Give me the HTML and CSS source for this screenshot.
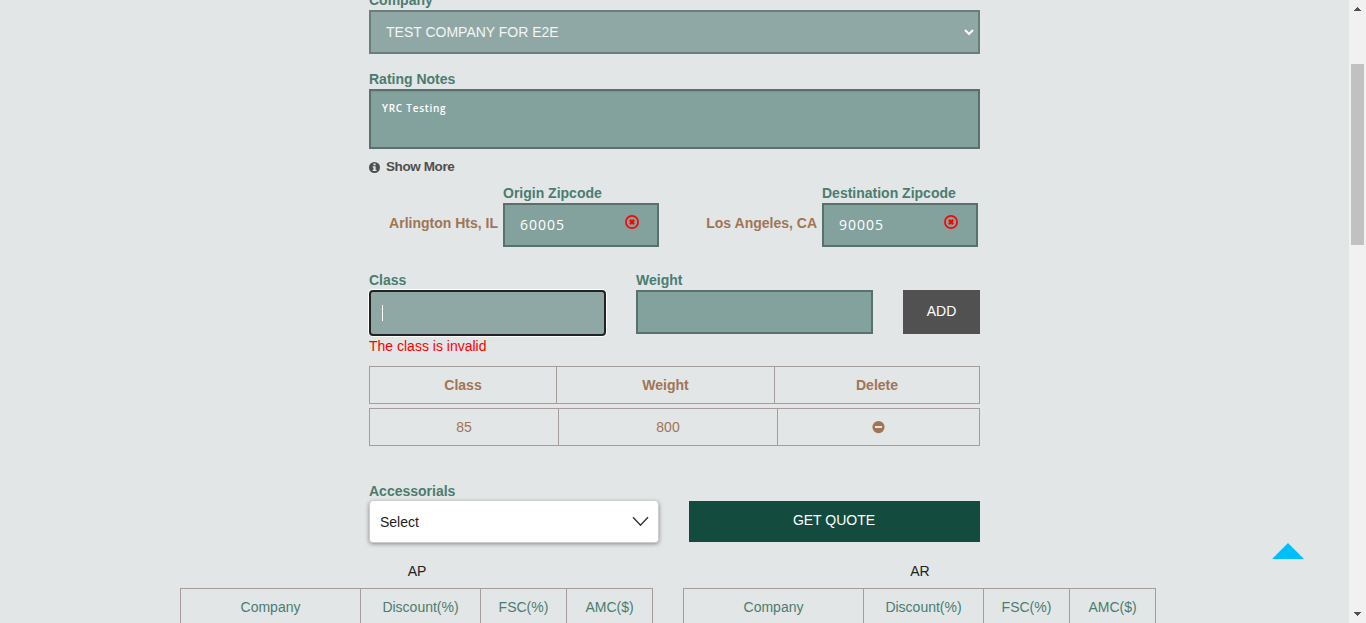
FILE: index.html
```html
<!DOCTYPE html>
<html lang="en">
<head>
<meta charset="utf-8">
<title>Rating</title>
<link rel="stylesheet" href="styles.css">
</head>
<body>
<main class="page">
  <section class="form">
    <label class="label">Company</label>
    <div class="field company"><span>TEST COMPANY FOR E2E</span>
      <svg width="10" height="7" viewBox="0 0 10 7"><path d="M1 1l4 4 4-4" fill="none" stroke="#fff" stroke-width="2"/></svg>
    </div>
    <label class="label notes-label">Rating Notes</label>
    <div class="field notes">YRC Testing</div>
    <div class="show-more">
      <svg width="12" height="12" viewBox="0 0 12 12"><circle cx="5.5" cy="6.5" r="5.5" fill="#4f4f4f"/><path d="M4.5 2.5h2.1v1.7H4.5zM3.7 5.2h2.9v3.5h.9V10H3.7V8.7h.8V6.5h-.8z" fill="#e2e6e6"/></svg>
      <span>Show More</span>
    </div>
    <div class="zips">
      <div class="zip">
        <span class="city">Arlington Hts, IL</span>
        <div class="zip-box"><label class="label">Origin Zipcode</label>
          <div class="field zip-field"><span>60005</span><svg class="clear" width="14" height="14" viewBox="0 0 14 14"><circle cx="7" cy="7" r="6.1" fill="none" stroke="#f00" stroke-width="1.7"/><path d="M4.9 4.9l4.2 4.2M9.1 4.9L4.9 9.1" stroke="#f00" stroke-width="2.3"/></svg></div></div>
      </div>
      <div class="zip">
        <span class="city">Los Angeles, CA</span>
        <div class="zip-box"><label class="label">Destination Zipcode</label>
          <div class="field zip-field"><span>90005</span><svg class="clear" width="14" height="14" viewBox="0 0 14 14"><circle cx="7" cy="7" r="6.1" fill="none" stroke="#f00" stroke-width="1.7"/><path d="M4.9 4.9l4.2 4.2M9.1 4.9L4.9 9.1" stroke="#f00" stroke-width="2.3"/></svg></div></div>
      </div>
    </div>
    <div class="items">
      <div class="item"><label class="label">Class</label>
        <div class="field focused"><i class="caret"></i></div>
        <div class="error">The class is invalid</div></div>
      <div class="item"><label class="label">Weight</label><div class="field"></div></div>
      <div class="add">ADD</div>
    </div>
    <div class="grid grid-head"><div>Class</div><div>Weight</div><div>Delete</div></div>
    <div class="grid grid-row"><div>85</div><div>800</div><div><svg width="13" height="13" viewBox="0 0 13 13"><circle cx="6.5" cy="6.1" r="6.1" fill="#a17456"/><path d="M3 5h7v2H3z" fill="#e2e6e6"/></svg></div></div>
    <div class="actions">
      <div class="accessorials"><label class="label">Accessorials</label>
        <div class="select"><span>Select</span><svg width="17" height="11" viewBox="0 0 17 11"><path d="M1 1.3l7.5 8 7.5-8" fill="none" stroke="#333" stroke-width="1.4"/></svg></div></div>
      <div class="quote">GET QUOTE</div>
    </div>
  </section>
  <section class="results">
    <div class="result"><div class="caption">AP</div>
      <div class="cols"><div>Company</div><div>Discount(%)</div><div>FSC(%)</div><div>AMC($)</div></div></div>
    <div class="result"><div class="caption">AR</div>
      <div class="cols"><div>Company</div><div>Discount(%)</div><div>FSC(%)</div><div>AMC($)</div></div></div>
  </section>
</main>
<aside class="scrollbar">
  <svg width="7" height="4" viewBox="0 0 7 4" shape-rendering="crispEdges"><path d="M3 0h1v1h1v1h1v1h1v1H0V3h1V2h1V1h1z" fill="#505050"/></svg>
  <div class="thumb"></div>
  <svg class="down" width="7" height="4" viewBox="0 0 7 4" shape-rendering="crispEdges"><path d="M0 0h7v1H6v1H5v1H4v1H3V3H2V2H1V1H0z" fill="#505050"/></svg>
</aside>
<svg class="to-top" width="32" height="16" viewBox="0 0 32 16"><path d="M16 0l16 16H0z" fill="#00bfff"/></svg>
</body>
</html>
```
FILE: styles.css
```css
* { box-sizing: border-box; }
body {
  margin: 0;
  height: 623px;
  display: flex;
  overflow: hidden;
  background: #e2e6e6;
  font: 14px/20px "Liberation Sans", Arial, sans-serif;
}
svg { display: block; flex: none; }
.page { width: 1349px; height: 623px; overflow: hidden; }
.form { width: 611px; margin: -10px 0 0 369px; }
.label { display: block; font-weight: bold; color: #4b7c70; white-space: nowrap; }
.field {
  display: flex;
  align-items: center;
  height: 44px;
  border: 2px solid #5a706c;
  background: #84a29d;
  color: #fff;
}
.company { justify-content: space-between; padding: 0 4px 0 15px; border-color: #6a7e7a; background: #8fa8a5; color: #f3f6f5; }
.notes-label { margin-top: 15px; }
.notes {
  height: 60px;
  align-items: flex-start;
  padding: 7px 11px;
  font-family: "Open Sans", sans-serif;
  font-size: 10px;
  font-weight: 600;
  letter-spacing: .75px;
  box-shadow: inset 0 1px 1px rgba(0, 0, 0, .08);
}
.show-more { display: flex; align-items: center; gap: 5px; margin-top: 8px; font-size: 13.5px; font-weight: bold; letter-spacing: -.4px; color: #4f4f4f; }
.zips { display: flex; justify-content: space-between; margin-top: 6px; padding-right: 2px; }
.zip { display: flex; justify-content: flex-end; gap: 5px; width: 290px; }
.city { padding-top: 30px; font-weight: bold; color: #a17456; }
.zip-box { width: 156px; }
.zip-field { justify-content: space-between; padding: 0 18px 0 15px; font-family: "Open Sans", sans-serif; letter-spacing: 1px; }
.clear { margin-bottom: 7px; }
.items { display: flex; gap: 30px; margin-top: 23px; height: 86px; }
.item { width: 237px; }
.focused { height: 46px; padding-left: 11px; border-color: #202424; border-radius: 4px; background: #8fa8a5; box-shadow: 0 0 0 1px #fff; }
.caret { width: 1px; height: 16px; background: #fff; }
.error { color: #f00; }
.add { flex: 1; height: 44px; margin-top: 20px; background: #515151; color: #fff; text-align: center; line-height: 43px; }
.grid { display: grid; height: 38px; border: 1px solid #a89c9a; color: #a17456; line-height: 36px; text-align: center; }
.grid > div { display: flex; justify-content: center; align-items: center; }
.grid > div + div { border-left: 1px solid #a89c9a; }
.grid-head { grid-template-columns: 186px 218px 1fr; margin-top: 10px; font-weight: bold; }
.grid-row { grid-template-columns: 188px 219px 1fr; margin-top: 4px; }
.actions { display: flex; gap: 30px; margin-top: 35px; }
.accessorials { width: 290px; }
.select { display: flex; align-items: center; justify-content: space-between; height: 42px; padding: 0 9px 0 10px; border: 1px solid #ccc; border-width: 0 1px 1px; border-radius: 4px; background: #fff; color: #222; box-shadow: 0 1px 4px rgba(0, 0, 0, .4); }
.quote { flex: 1; height: 41px; margin-top: 20px; padding-right: 1px; background: #134b3e; color: #fff; text-align: center; line-height: 39px; }
.results { display: flex; gap: 30px; margin: 18px 0 0 180px; }
.result { width: 473px; }
.caption { height: 27px; padding-left: 1px; text-align: center; color: #222; }
.cols { display: grid; grid-template-columns: 179px 120px 86px 1fr; height: 40px; border: 1px solid #a89c9a; color: #4b7c70; text-align: center; line-height: 37px; }
.cols > div + div { border-left: 1px solid #a89c9a; }
.scrollbar { display: flex; flex-direction: column; align-items: center; width: 17px; padding: 7px 1px 7px; background: #f1f1f1; }
.thumb { width: 13px; height: 181px; margin-top: 53px; background: #c1c1c1; }
.down { margin-top: auto; }
.to-top { position: absolute; left: 1272px; top: 543px; }
```
